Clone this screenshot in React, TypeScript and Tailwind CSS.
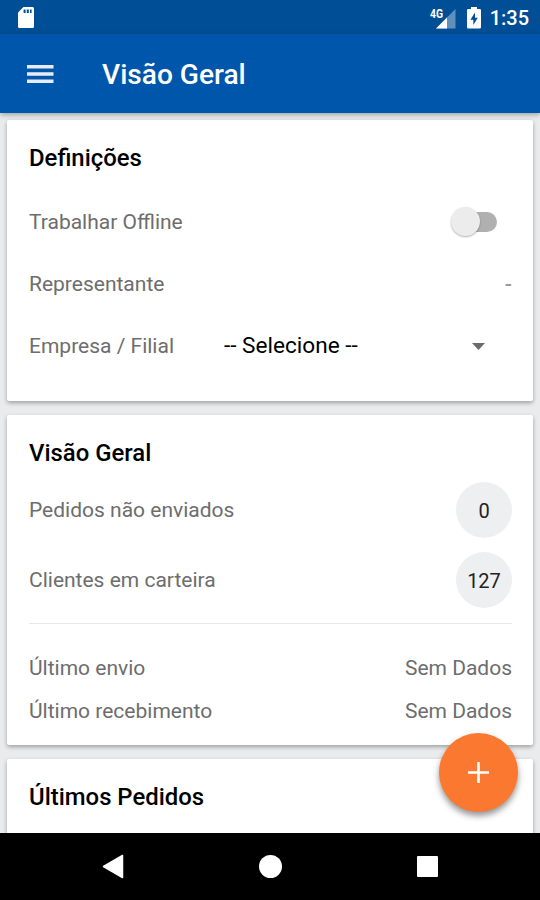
import type { ReactNode } from 'react';

function StatusBar() {
    return (
        <div className="h-[34px] shrink-0 bg-[#004e95] flex items-center justify-between pl-[18px] pr-[11px] pt-px text-white">
            <svg width="16" height="21" viewBox="0 0 16 21">
                <path d="M5.5 0H14.5Q16 0 16 1.5V19.5Q16 21 14.5 21H1.5Q0 21 0 19.5V5.5Z" fill="#fff" />
                <path d="M5.6 2.6h2v3.4h-2zM8.8 2.6h2v3.4h-2zM12 2.6h1.6v3.4h-1.6z" fill="#004e95" />
            </svg>
            <div className="flex items-center">
                <svg width="26" height="22" viewBox="0 0 26 22">
                    <path d="M25.5 2V21.5H6Z" fill="#5f8fbd" />
                    <path d="M17 10.5V21.5H6Z" fill="#fff" />
                    <text x="0" y="10.5" fontSize="12.5" fontWeight="700" fill="#fff" textLength="13" lengthAdjust="spacingAndGlyphs">4G</text>
                </svg>
                <svg className="ml-[11px]" width="14" height="22" viewBox="0 0 14 22">
                    <path d="M4 0H10V2H12.8Q14 2 14 3.2V20.3Q14 21.5 12.8 21.5H1.2Q0 21.5 0 20.3V3.2Q0 2 1.2 2H4Z" fill="#fff" />
                    <path d="M8 5.5L3.4 12.8H6.3V18L10.8 10.8H8Z" fill="#004e95" />
                </svg>
                <span className="ml-[9px] text-[20px] leading-none font-medium">1:35</span>
            </div>
        </div>
    );
}

function AppBar() {
    return (
        <header className="h-[79px] shrink-0 bg-[#0056aa] flex items-center pl-[27px] pt-[3px] z-10 shadow-[0_2px_5px_rgba(0,0,0,0.3)]">
            <svg className="mb-[3px]" width="27" height="20" viewBox="0 0 27 20" fill="#e6edf8">
                <path d="M0 1h26.5v3.5H0zM0 8.200h26.5v3.5H0zM0 15.4h26.5v3.5H0z" />
            </svg>
            <h1 className="ml-[48px] text-[28.1px] leading-8 font-medium text-white">Visão Geral</h1>
        </header>
    );
}

function Card({ title, className, children }: { title: string; className: string; children?: ReactNode }) {
    return (
        <section className={`shrink-0 bg-white rounded-[2px] pl-[22px] pr-[21px] shadow-[0_2px_4px_rgba(0,0,0,0.32)] ${className}`}>
            <h2 className="text-[23.9px] leading-[30px] font-medium text-black">{title}</h2>
            {children}
        </section>
    );
}

function Row({ label, className, children }: { label: string; className: string; children: ReactNode }) {
    return (
        <div className={`flex items-center justify-between ${className}`}>
            <span>{label}</span>
            {children}
        </div>
    );
}

function Count({ value }: { value: number }) {
    return (
        <span className="size-14 rounded-full bg-[#eeeff1] flex items-center justify-center pt-[2px] text-[20px] text-[#222]">
            {value}
        </span>
    );
}

function NavBar() {
    return (
        <nav className="h-[67px] shrink-0 bg-black flex items-center justify-between pl-[102px] pr-[102px] z-10">
            <svg width="22" height="25" viewBox="0 0 22 25">
                <path d="M20.5 1.5V23.5L1.5 12.5Z" fill="#fff" stroke="#fff" strokeWidth="1.5" strokeLinejoin="round" />
            </svg>
            <span className="size-[23px] rounded-full bg-white" />
            <span className="size-[21px] rounded-[1px] bg-white" />
        </nav>
    );
}

export default function App() {
    return (
        <div className="relative w-[540px] h-[900px] overflow-hidden flex flex-col bg-[#e9ebed] font-[Roboto,'Liberation_Sans',sans-serif]">
            <StatusBar />
            <AppBar />

            <main className="flex-1 min-h-0 overflow-hidden flex flex-col gap-[14px] px-[7px] pt-[7px] text-[21px] leading-[28px] text-[#6d6d6d]">
                <Card title="Definições" className="h-[281px] pt-[23px]">
                    <Row label="Trabalhar Offline" className="mt-[17px] h-[63px]">
                        <span className="relative mr-[15px] w-[45px] h-[20px] rounded-full bg-[#b0b0b0]">
                            <span className="absolute left-[-1px] top-[-5px] size-[29px] rounded-full bg-[#ececec] shadow-[0_1px_2px_rgba(0,0,0,0.3)]" />
                        </span>
                    </Row>
                    <Row label="Representante" className="h-[62px]">
                        <span className="text-[#999] font-medium">-</span>
                    </Row>
                    <div className="h-[62px] flex items-center">
                        <span className="w-[195px]">Empresa / Filial</span>
                        <span className="flex-1 text-[22.6px] text-black">-- Selecione --</span>
                        <svg className="mr-[27px]" width="13" height="7" viewBox="0 0 13 7">
                            <path d="M0 0H13L6.5 7Z" fill="#6a6a6a" />
                        </svg>
                    </div>
                </Card>

                <Card title="Visão Geral" className="h-[330px] pt-[23px]">
                    <Row label="Pedidos não enviados" className="mt-[14px] h-14">
                        <Count value={0} />
                    </Row>
                    <Row label="Clientes em carteira" className="mt-[14px] h-14">
                        <Count value={127} />
                    </Row>
                    <hr className="mt-[15px] mb-[22px] border-[#e8e8e8]" />
                    <Row label="Último envio" className="h-[43px]">
                        <span>Sem Dados</span>
                    </Row>
                    <Row label="Último recebimento" className="h-[43px]">
                        <span>Sem Dados</span>
                    </Row>
                </Card>

                <Card title="Últimos Pedidos" className="h-[120px] pt-[23px]" />
            </main>

            <NavBar />

            <button className="absolute left-[439px] top-[733px] size-[79px] rounded-full bg-[#fb7831] flex items-center justify-center shadow-[0_4px_6px_rgba(0,0,0,0.42)]">
                <svg width="21" height="21" viewBox="0 0 21 21" fill="#fff">
                    <path d="M9.2 0h2.6v9.2H21v2.6h-9.2V21H9.2v-9.2H0V9.2h9.2z" />
                </svg>
            </button>
        </div>
    );
}
